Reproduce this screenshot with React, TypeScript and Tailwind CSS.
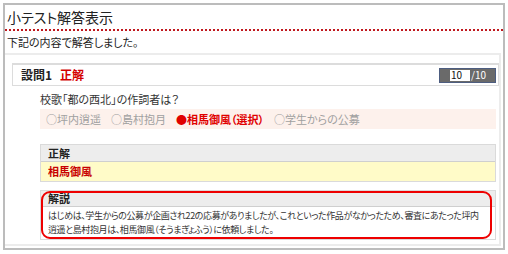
import React from "react";

const choices = [
  { label: "○坪内逍遥", picked: false },
  { label: "○島村抱月", picked: false },
  { label: "●相馬御風（選択）", picked: true },
  { label: "○学生からの公募", picked: false },
];

const jp = "font-['Noto_Sans_CJK_JP',sans-serif] [font-feature-settings:'palt']";

export default function App() {
  return (
    <div className={`w-[508px] h-[254px] bg-white pt-[3px] pl-[3px] ${jp}`}>
      <div className="w-[502px] h-[247px] border-2 border-[#bcbcbc] flex flex-col">
        {/* page title */}
        <div className="h-[26px] border-b-2 border-dotted border-[#c0181e] flex items-center px-[2px]">
          <h1 className="text-[14px] leading-none text-[#222]">小テスト解答表示</h1>
        </div>
        <p className="h-[22px] flex items-center px-[2px] text-[11px] text-[#222]">下記の内容で解答しました。</p>

        {/* result panel */}
        <div className="flex-1 mr-[2px] mb-[2px] border-2 border-l-0 border-[#ececec] pt-[8px] pl-[7px]">
          <div className="h-[23px] border border-t-2 border-[#dcdcdc] flex items-center justify-between pl-[8px] pr-[2px]">
            <div className="flex items-center gap-[8px] text-[12px] font-bold leading-none">
              <span className="text-[#222]">設問1</span>
              <span className="text-[#d40000]">正解</span>
            </div>
            <div className="w-[57px] h-[15px] bg-[#6a6a6a] border border-[#4d5d80] flex items-center pl-[10px] text-[10px] leading-none">
              <span className="w-[20px] h-[11px] bg-white text-[#111] flex items-center pl-[1px]">10</span>
              <span className="text-white ml-[1px]">/10</span>
            </div>
          </div>

          <div className="pl-[28px] pr-[3px]">
            <p className="h-[23px] flex items-center text-[11px] text-[#333] pt-[3px]">校歌「都の西北」の作詞者は？</p>
            <div className="h-[20px] bg-[#fdf1ec] flex items-center gap-[10px] px-[6px] text-[11px] leading-none">
              {choices.map((c) => (
                <span key={c.label} className={c.picked ? "text-[#e00000] font-bold" : "text-[#a0a0a0]"}>
                  {c.label}
                </span>
              ))}
            </div>

            <div className="mt-[15px] border border-[#dadada]">
              <div className="h-[17px] bg-[#ededed] border-b border-[#cfcfcf] flex items-center px-[7px] text-[11px] font-bold text-[#222]">正解</div>
              <div className="h-[19px] bg-[#fffbc8] flex items-center px-[7px] text-[11px] font-bold text-[#c80000]">相馬御風</div>
            </div>

            <div className="relative mt-[8px]">
              <div className="border border-[#dadada]">
                <div className="h-[16px] bg-[#ededed] border-b border-[#cfcfcf] flex items-center px-[7px] text-[11px] font-bold text-[#222]">解説</div>
                <p className="px-[7px] py-[2px] text-[9px] tracking-[-0.4px] leading-[14px] text-[#333] whitespace-nowrap">
                  はじめは、学生からの公募が企画され22の応募がありましたが、これといった作品がなかったため、審査にあたった坪内
                  <br />
                  逍遥と島村抱月は、相馬御風（そうまぎょふう）に依頼しました。
                </p>
              </div>
              <div className="absolute left-[1px] top-[1px] w-[451px] h-[48px] border-2 border-[#ee0000] rounded-[9px]" />
            </div>
          </div>
        </div>
      </div>
    </div>
  );
}
